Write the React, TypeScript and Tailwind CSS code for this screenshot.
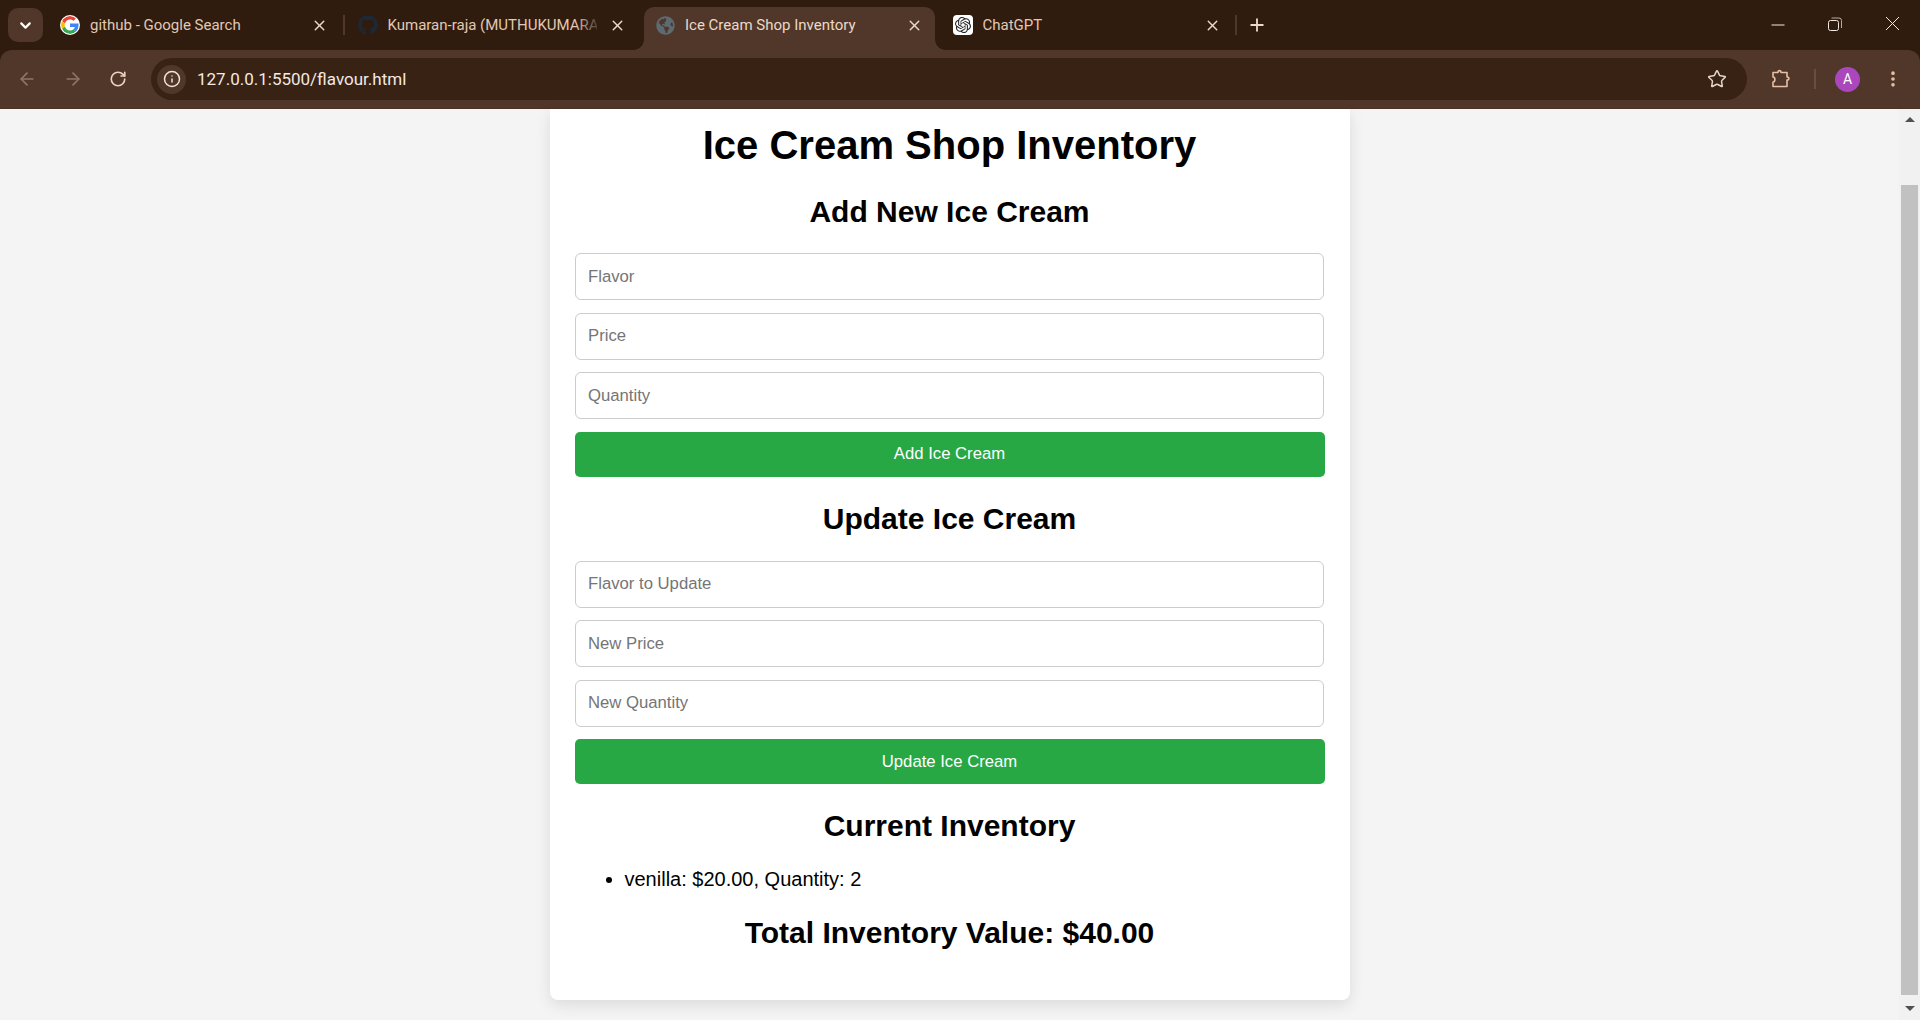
import React from "react";
import { ArrowLeft, ArrowRight, ChevronDown, Info, MoreVertical, Plus, RotateCw, Star, X } from "lucide-react";
import { FaGithub, FaGlobeAmericas } from "react-icons/fa";
import { SiOpenai } from "react-icons/si";

const GoogleIcon = () => (
  <svg viewBox="0 0 48 48" className="w-[20px] h-[20px] rounded-full bg-white p-[1px] shrink-0">
    <path fill="#EA4335" d="M24 9.5c3.5 0 6.7 1.2 9.2 3.6l6.9-6.9C35.9 2.4 30.5 0 24 0 14.6 0 6.5 5.4 2.6 13.2l8 6.2C12.5 13.7 17.8 9.5 24 9.5z" />
    <path fill="#4285F4" d="M46.9 24.5c0-1.6-.1-3.1-.4-4.5H24v9h12.9c-.6 3-2.2 5.5-4.7 7.2l7.7 6c4.500-4.200 7-10.300 7-17.700z" />
    <path fill="#FBBC05" d="M10.500 28.600c-.5-1.400-.8-3-.8-4.600s.3-3.200.8-4.600l-8-6.200C.9 16.500 0 20.100 0 24s.9 7.500 2.600 10.800l7.900-6.200z" />
    <path fill="#34A853" d="M24 48c6.500 0 11.900-2.100 15.900-5.800l-7.700-6c-2.100 1.400-4.900 2.300-8.200 2.300-6.200 0-11.500-4.200-13.400-9.900l-8 6.200C6.500 42.600 14.600 48 24 48z" />
  </svg>
);

const Tab = ({ icon, title, active, fade }: { icon: React.ReactNode; title: string; active?: boolean; fade?: boolean }) => (
  <div
    className={`relative w-[291px] h-[43px] shrink-0 flex items-center pl-[11px] pr-[12px] pb-[7px] rounded-t-[10px] ${
      active ? "bg-[#503729] text-[#ecd9ca]" : "text-[#e3c8b3]"
    }`}
  >
    {active && (
      <>
        <div className="absolute left-[-10px] bottom-0 w-[10px] h-[10px] bg-[radial-gradient(circle_at_0_0,transparent_9.500px,#503729_10px)]" />
        <div className="absolute right-[-10px] bottom-0 w-[10px] h-[10px] bg-[radial-gradient(circle_at_100%_0,transparent_9.500px,#503729_10px)]" />
      </>
    )}
    <div className="w-[20px] flex justify-center shrink-0">{icon}</div>
    <div className="ml-[10px] flex-1 min-w-0 whitespace-nowrap overflow-hidden text-[15px] leading-[20px]">{title}</div>
    {fade && <div className="absolute right-[35px] top-0 h-full w-[28px] bg-gradient-to-r from-transparent to-[#2f1c0f]" />}
    <X size={17} strokeWidth={2} className="shrink-0 ml-[12px] text-[#ecd9ca]" />
  </div>
);

const TabStrip = () => (
  <div className="h-[50px] flex items-end relative">
    <div className="absolute left-[8px] top-[8px] w-[35px] h-[34px] rounded-[10px] bg-[#503729] flex items-center justify-center">
      <ChevronDown size={17} strokeWidth={3} className="text-white" />
    </div>
    <div className="ml-[49px] flex items-end">
      <Tab icon={<GoogleIcon />} title="github - Google Search" />
      <div className="w-[2px] h-[20px] mb-[15px] ml-[3px] mr-[1.500px] bg-[#503729] shrink-0" />
      <Tab icon={<FaGithub size={20} className="text-[#1c2a38]" />} title="Kumaran-raja (MUTHUKUMARA" fade />
      <div className="w-[6.500px] shrink-0" />
      <Tab icon={<FaGlobeAmericas size={19} className="text-[#5e6a72]" />} title="Ice Cream Shop Inventory" active />
      <div className="w-[6.500px] shrink-0" />
      <Tab
        icon={
          <div className="w-[20px] h-[20px] rounded-[4px] bg-white flex items-center justify-center">
            <SiOpenai size={16} className="text-[#222]" />
          </div>
        }
        title="ChatGPT"
      />
      <div className="w-[2px] h-[20px] mb-[15px] ml-[2px] bg-[#503729] shrink-0" />
      <Plus size={20} strokeWidth={2.2} className="ml-[10px] mb-[15px] text-[#ecd9ca]" />
    </div>
    <div className="absolute right-[20px] top-[16px] flex items-center gap-[43px] text-[#f0e8e2]">
      <svg width="14" height="14" viewBox="0 0 14 14" fill="none" stroke="currentColor" strokeWidth="1">
        <path d="M0.500 8h13" />
      </svg>
      <svg width="14" height="14" viewBox="0 0 14 14" fill="none" stroke="currentColor" strokeWidth="1">
        <rect x="0.500" y="3.500" width="10" height="10" rx="2" />
        <path d="M3.500 1h7.500a2.500 2.500 0 0 1 2.500 2.500V11" opacity="0.7" />
      </svg>
      <svg width="15" height="15" viewBox="0 0 15 15" fill="none" stroke="currentColor" strokeWidth="1">
        <path d="M1 1l13 13M14 1L1 14" />
      </svg>
    </div>
  </div>
);

const Toolbar = () => (
  <div className="h-[59px] bg-[#503729] rounded-t-[12px] flex items-center text-[#e6c9b4] border-b border-b-[#4a3226]">
    <ArrowLeft size={20} className="ml-[17px] text-[#8c7669]" />
    <ArrowRight size={20} className="ml-[26px] text-[#8c7669]" />
    <RotateCw size={18} strokeWidth={2.2} className="ml-[26px] text-[#ecd3c1]" />
    <div className="ml-[24px] w-[1596px] h-[42px] rounded-full bg-[#382214] flex items-center pl-[6px] pr-[20px]">
      <div className="w-[29px] h-[29px] rounded-full bg-[#503729] flex items-center justify-center">
        <Info size={18} className="text-[#f0e4da]" />
      </div>
      <div className="ml-[11px] mt-[2px] flex-1 text-[17px] text-[#f3e9e1] font-['Roboto',sans-serif]">127.0.0.1:5500/flavour.html</div>
      <Star size={20} strokeWidth={1.8} className="text-[#e3d5ca]" />
    </div>
    <svg width="20" height="20" viewBox="0 0 20 20" fill="none" stroke="#e6bfa6" strokeWidth="1.600" className="ml-[24px]">
      <path d="M2 3.500h5c0-2.500 3-2.500 3 0h6v4.500c2.500 0 2.500 3 0 3v6.500H2v-4.500c2.500 0 2.500-5 0-5z" strokeLinejoin="round" />
    </svg>
    <div className="ml-[23px] w-[2px] h-[20px] bg-[#6b4d3c]" />
    <div className="ml-[19px] w-[25px] h-[25px] rounded-full bg-[#ab47bc] text-white text-[14px] flex items-center justify-center font-['Roboto',sans-serif]">A</div>
    <MoreVertical size={20} strokeWidth={2.4} className="ml-[23px] text-[#e6bfa6]" />
  </div>
);

const Field = ({ placeholder }: { placeholder: string }) => (
  <input
    readOnly
    placeholder={placeholder}
    className="block w-[749px] h-[47px] px-[12.500px] border-[1.500px] border-[#ccc] rounded-[6px] bg-white text-[16.700px] outline-none placeholder:text-[#757575]"
  />
);

const ActionButton = ({ label }: { label: string }) => (
  <button className="block w-full h-[45px] rounded-[5px] bg-[#28a745] text-white text-[16.700px] text-center">{label}</button>
);

const Heading = ({ children, className }: { children: React.ReactNode; className: string }) => (
  <h2 className={`text-center font-bold text-black text-[30px] leading-[36px] ${className}`}>{children}</h2>
);

const InventoryCard = () => (
  <div className="w-[800px] h-[891px] mx-auto bg-white rounded-b-[8px] shadow-[0_5px_15px_rgba(0,0,0,0.1)] px-[25px] text-black font-['Liberation_Sans',Arial,sans-serif]">
    <h1 className="pt-[12px] text-center font-bold text-[40px] leading-[48px]">Ice Cream Shop Inventory</h1>
    <Heading className="mt-[25px] mb-[23px]">Add New Ice Cream</Heading>
    <div className="flex flex-col gap-[12.500px]">
      <Field placeholder="Flavor" />
      <Field placeholder="Price" />
      <Field placeholder="Quantity" />
      <ActionButton label="Add Ice Cream" />
    </div>
    <Heading className="mt-[24px] mb-[24px]">Update Ice Cream</Heading>
    <div className="flex flex-col gap-[12.500px]">
      <Field placeholder="Flavor to Update" />
      <Field placeholder="New Price" />
      <Field placeholder="New Quantity" />
      <ActionButton label="Update Ice Cream" />
    </div>
    <Heading className="mt-[24px]">Current Inventory</Heading>
    <ul className="list-disc pl-[50px] mt-[23px] text-[20px] leading-[24px]">
      <li>venilla: $20.00, Quantity: 2</li>
    </ul>
    <Heading className="mt-[24px]">Total Inventory Value: $40.00</Heading>
  </div>
);

const Scrollbar = () => (
  <div className="w-[21px] shrink-0 bg-[#f1f1f1] flex flex-col items-center relative">
    <div className="mt-[8px] w-0 h-0 border-x-[5px] border-x-transparent border-b-[5px] border-b-[#505050]" />
    <div className="mt-[63px] w-[17px] h-[810px] bg-[#c1c1c1]" />
    <div className="mt-[11px] w-0 h-0 border-x-[5px] border-x-transparent border-t-[5px] border-t-[#505050]" />
  </div>
);

export default function App() {
  return (
    <div className="w-full h-[1020px] overflow-hidden flex flex-col bg-[#2f1c0f] font-['Roboto',sans-serif]">
      <TabStrip />
      <Toolbar />
      <div className="flex-1 min-h-0 flex bg-[#f4f4f4]">
        <div className="flex-1 min-w-0">
          <InventoryCard />
        </div>
        <Scrollbar />
      </div>
    </div>
  );
}
